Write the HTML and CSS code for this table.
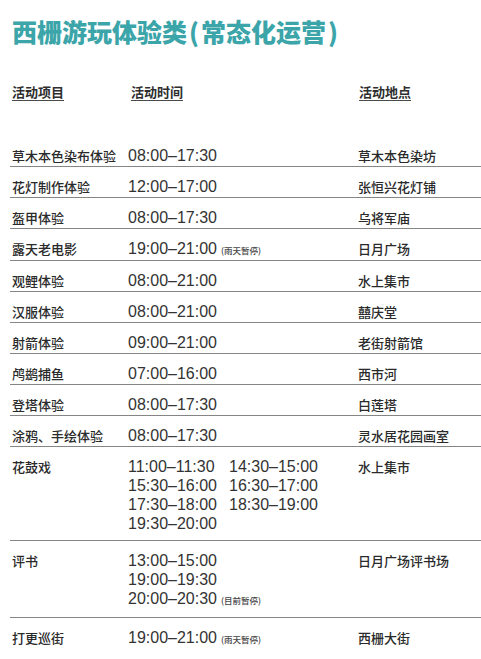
FILE: index.html
```html
<!DOCTYPE html>
<html lang="zh-CN">
<head>
<meta charset="utf-8">
<title>西栅游玩体验类</title>
<link rel="stylesheet" href="styles.css">
</head>
<body>
<div class="page">
  <h1 class="title">西栅游玩体验类<span class="paren">(</span>常态化运营<span class="paren">)</span></h1>
  <div class="head">
    <div class="hcell"><span>活动项目</span></div>
    <div class="hcell"><span>活动时间</span></div>
    <div class="hcell"><span>活动地点</span></div>
  </div>
  <div class="rows">
    <div class="row"><div class="name">草木本色染布体验</div><div class="time">08:00–17:30</div><div class="place">草木本色染坊</div></div>
    <div class="row"><div class="name">花灯制作体验</div><div class="time">12:00–17:00</div><div class="place">张恒兴花灯铺</div></div>
    <div class="row"><div class="name">盔甲体验</div><div class="time">08:00–17:30</div><div class="place">乌将军庙</div></div>
    <div class="row"><div class="name">露天老电影</div><div class="time">19:00–21:00<span class="note">(雨天暂停)</span></div><div class="place">日月广场</div></div>
    <div class="row"><div class="name">观鲤体验</div><div class="time">08:00–21:00</div><div class="place">水上集市</div></div>
    <div class="row"><div class="name">汉服体验</div><div class="time">08:00–21:00</div><div class="place">囍庆堂</div></div>
    <div class="row"><div class="name">射箭体验</div><div class="time">09:00–21:00</div><div class="place">老街射箭馆</div></div>
    <div class="row"><div class="name">鸬鹚捕鱼</div><div class="time">07:00–16:00</div><div class="place">西市河</div></div>
    <div class="row"><div class="name">登塔体验</div><div class="time">08:00–17:30</div><div class="place">白莲塔</div></div>
    <div class="row"><div class="name">涂鸦、手绘体验</div><div class="time">08:00–17:30</div><div class="place">灵水居花园画室</div></div>
    <div class="row multi"><div class="name">花鼓戏</div>
      <div class="times two">
        <span>11:00–11:30</span><span>14:30–15:00</span>
        <span>15:30–16:00</span><span>16:30–17:00</span>
        <span>17:30–18:00</span><span>18:30–19:00</span>
        <span>19:30–20:00</span>
      </div>
      <div class="place">水上集市</div></div>
    <div class="row multi"><div class="name">评书</div>
      <div class="times">
        <span>13:00–15:00</span>
        <span>19:00–19:30</span>
        <span>20:00–20:30<span class="note">(目前暂停)</span></span>
      </div>
      <div class="place">日月广场评书场</div></div>
    <div class="row last"><div class="name">打更巡街</div><div class="time">19:00–21:00<span class="note">(雨天暂停)</span></div><div class="place">西栅大街</div></div>
  </div>
</div>
</body>
</html>
```
FILE: styles.css
```css
html, body {
  margin: 0;
  padding: 0;
  background: #ffffff;
}
body {
  font-family: "Liberation Sans", "Noto Sans CJK SC", sans-serif;
  color: #353535;
  overflow: hidden;
}
.page {
  width: 481px;
  height: 659px;
  overflow: hidden;
}
.title {
  margin: 0;
  padding: 16px 0 0 12px;
  font-family: "Noto Sans CJK SC", sans-serif;
  font-size: 25px;
  line-height: 30px;
  font-weight: 900;
  color: #3ba5a9;
  white-space: nowrap;
}
.paren {
  padding: 0 2px;
}
.head {
  margin-top: 37px;
  display: grid;
  grid-template-columns: 119px 228px 1fr;
  padding-left: 12px;
}
.hcell span {
  display: inline-block;
  font-family: "Noto Sans CJK SC", sans-serif;
  font-size: 13px;
  font-weight: 700;
  line-height: 16px;
  color: #2e2e2e;
  border-bottom: 1.5px solid #4a4a4a;
}
.rows {
  margin-top: 35px;
  margin-left: 10px;
}
.row {
  display: grid;
  grid-template-columns: 116px 230px 1fr;
  padding: 10px 0 0 2px;
  border-bottom: 1.5px solid #858585;
  line-height: 20px;
}
.row.multi {
  padding-bottom: 7px;
  line-height: 19px;
}
.row.last {
  border-bottom: none;
}
.name, .place {
  font-family: "Noto Sans CJK SC", sans-serif;
  font-size: 13px;
  font-weight: 500;
  color: #2a2a2a;
}
.time, .times {
  font-size: 16px;
  color: #333;
}
.times {
  display: grid;
  grid-template-columns: auto;
  justify-content: start;
}
.times.two {
  grid-template-columns: auto auto;
  column-gap: 12px;
}
.note {
  font-family: "Noto Sans CJK SC", sans-serif;
  font-size: 8.5px;
  font-weight: 500;
  color: #444;
  margin-left: 4px;
}
```
